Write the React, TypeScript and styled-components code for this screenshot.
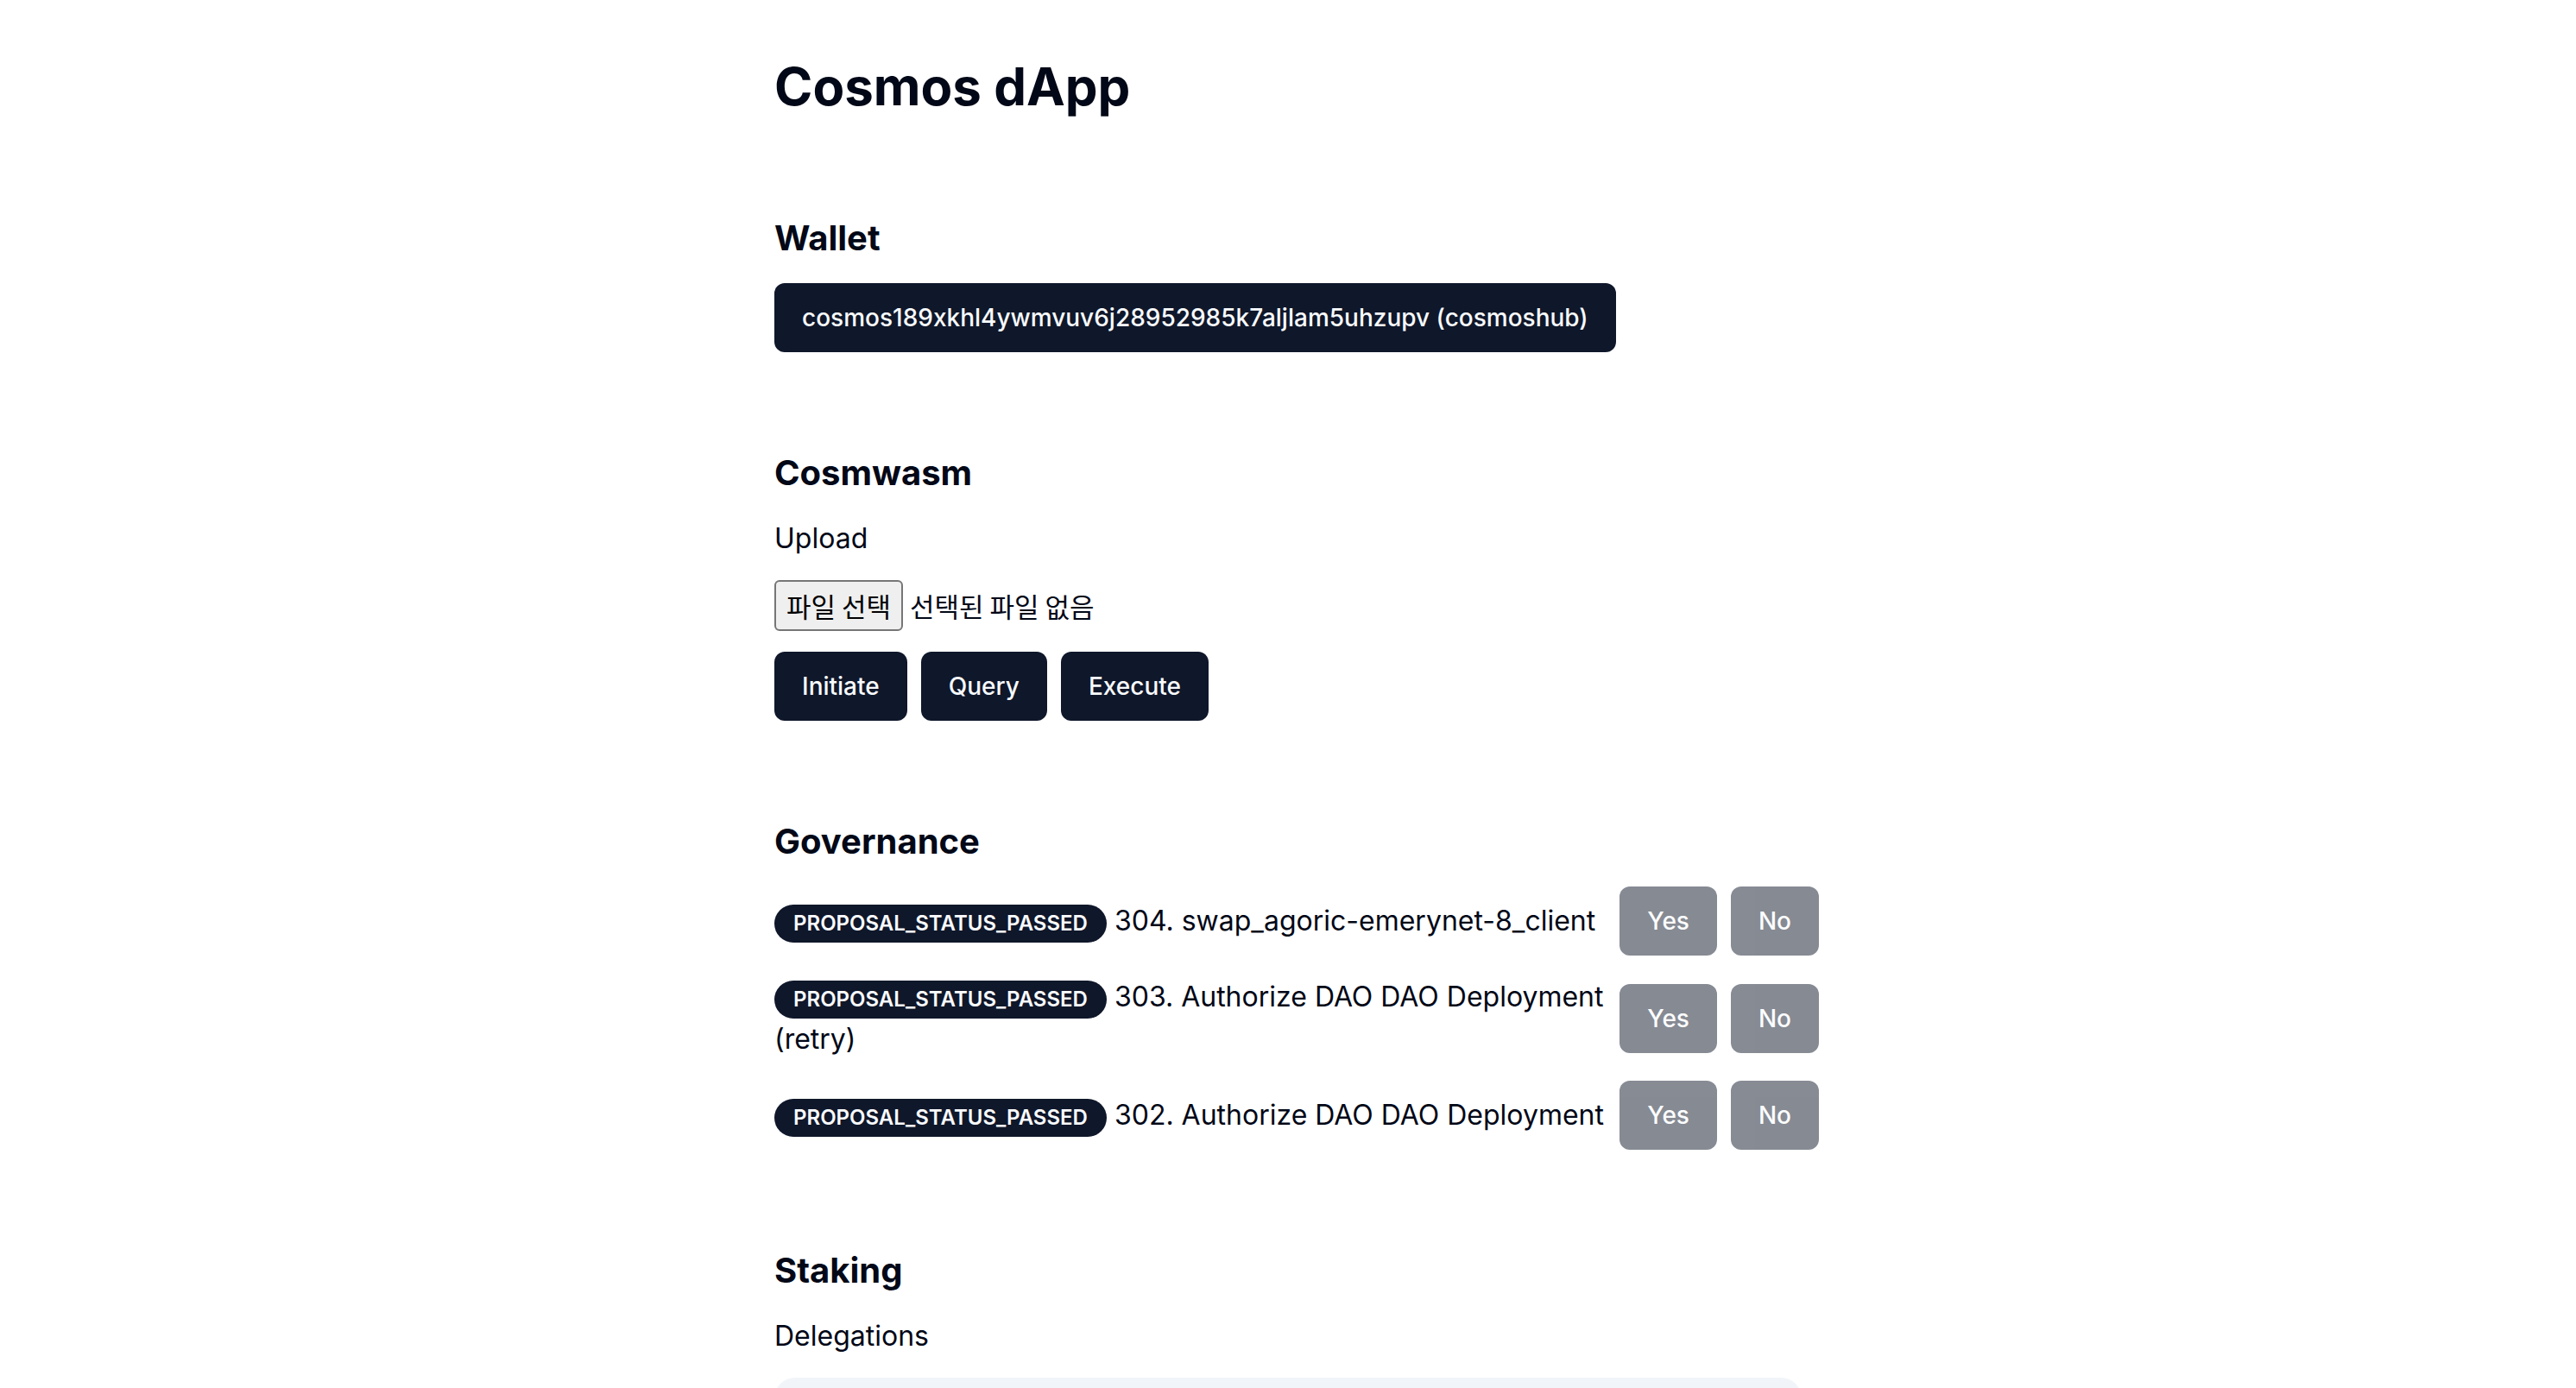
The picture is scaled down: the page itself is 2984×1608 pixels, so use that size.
import React from "react";
import styled, { createGlobalStyle } from "styled-components";

const Global = createGlobalStyle`
  * { box-sizing: border-box; }
  html, body { margin: 0; padding: 0; background: #ffffff; }
  body {
    font-family: Inter, "Noto Sans", "Noto Sans CJK KR", sans-serif;
    color: #020817;
  }
`;

const Main = styled.main`
  width: 1190px;
  margin: 0 auto;
  padding-top: 64px;
  display: flex;
  flex-direction: column;
  gap: 112px;
`;

const Title = styled.h1`
  margin: 0;
  font-size: 60px;
  line-height: 72px;
  font-weight: 700;
`;

const Section = styled.section`
  display: flex;
  flex-direction: column;
  align-items: flex-start;
  gap: 24px;
`;

const Heading = styled.h2`
  margin: 0;
  font-size: 40px;
  line-height: 56px;
  font-weight: 700;
`;

const Label = styled.div`
  font-size: 32px;
  line-height: 48px;
`;

const Button = styled.button<{ $muted?: boolean }>`
  display: inline-flex;
  align-items: center;
  justify-content: center;
  height: 80px;
  padding: 0 32px;
  border: none;
  border-radius: 12px;
  background: #0f172a;
  color: #f8fafc;
  font-family: Inter, sans-serif;
  font-size: 28px;
  font-weight: 500;
  white-space: nowrap;
  opacity: ${(p) => (p.$muted ? 0.5 : 1)};
  cursor: ${(p) => (p.$muted ? "not-allowed" : "pointer")};
`;

const FilePicker = styled.div`
  display: flex;
  align-items: center;
  gap: 8px;
  font-family: "Noto Sans CJK KR", sans-serif;
  font-size: 31px;
`;

const FileButton = styled.span`
  display: inline-block;
  background: #efefef;
  border: 2px solid #767676;
  border-radius: 6px;
  padding: 2px 12px;
  line-height: 51px;
  color: #000;
`;

const FileName = styled.span`
  line-height: 51px;
  color: #020817;
`;

const ButtonRow = styled.div`
  display: flex;
  gap: 16px;
`;

const Proposals = styled.div`
  display: flex;
  flex-direction: column;
  gap: 24px;
`;

const ProposalRow = styled.div`
  width: 1210px;
  display: grid;
  grid-template-columns: 1fr auto;
  column-gap: 12px;
  align-items: center;
`;

const ProposalText = styled.div`
  font-size: 32px;
  line-height: 48px;
`;

const Badge = styled.span`
  display: inline-flex;
  align-items: center;
  border: 2px solid transparent;
  border-radius: 9999px;
  padding: 4px 20px;
  background: #0f172a;
  color: #f8fafc;
  font-size: 24px;
  line-height: 32px;
  font-weight: 600;
`;

const Panel = styled.div`
  width: 100%;
  height: 320px;
  background: #f1f5f9;
  border-radius: 24px;
`;

const proposals = [
  { id: 304, title: "swap_agoric-emerynet-8_client" },
  { id: 303, title: "Authorize DAO DAO Deployment (retry)" },
  { id: 302, title: "Authorize DAO DAO Deployment" },
];

export default function App() {
  return (
    <>
      <Global />
      <Main>
        <Title>Cosmos dApp</Title>

        <Section>
          <Heading>Wallet</Heading>
          <Button>cosmos189xkhl4ywmvuv6j28952985k7aljlam5uhzupv (cosmoshub)</Button>
        </Section>

        <Section>
          <Heading>Cosmwasm</Heading>
          <Label>Upload</Label>
          <FilePicker>
            <FileButton>파일 선택</FileButton>
            <FileName>선택된 파일 없음</FileName>
          </FilePicker>
          <ButtonRow>
            <Button>Initiate</Button>
            <Button>Query</Button>
            <Button>Execute</Button>
          </ButtonRow>
        </Section>

        <Section>
          <Heading>Governance</Heading>
          <Proposals>
            {proposals.map((p) => (
              <ProposalRow key={p.id}>
                <ProposalText>
                  <Badge>PROPOSAL_STATUS_PASSED</Badge> {p.id}. {p.title}
                </ProposalText>
                <ButtonRow>
                  <Button $muted disabled>Yes</Button>
                  <Button $muted disabled>No</Button>
                </ButtonRow>
              </ProposalRow>
            ))}
          </Proposals>
        </Section>

        <Section>
          <Heading>Staking</Heading>
          <Label>Delegations</Label>
          <Panel />
        </Section>
      </Main>
    </>
  );
}
